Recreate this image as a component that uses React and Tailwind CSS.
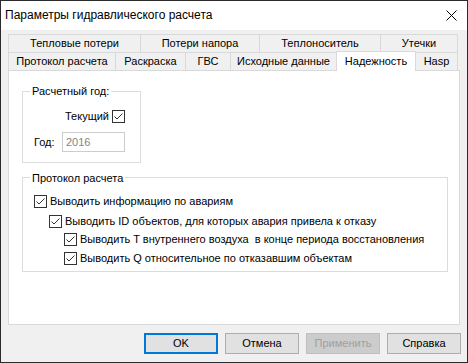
import React from "react";

const font = { fontFamily: '"Liberation Sans", Arial, sans-serif' };

function Check({ className = "" }) {
  return (
    <svg width="13" height="13" viewBox="0 0 13 13" className={"shrink-0 " + className}>
      <rect x="0.5" y="0.5" width="12" height="12" fill="#fff" stroke="#333" />
      <path d="M2.5 6.5 L5 9 L10.5 3.5" fill="none" stroke="#333" strokeWidth="1" />
    </svg>
  );
}

function Tab({ w, label, last }) {
  return (
    <div
      className={
        "h-[18px] flex items-center justify-center border-t border-l border-[#d9d9d9] bg-[#f0f0f0] " +
        (last ? "border-r " : "")
      }
      style={{ width: w }}
    >
      {label}
    </div>
  );
}

export default function App() {
  return (
    <div
      className="w-[468px] h-[363px] border border-[#2b2b2b] bg-[#f0f0f0] flex flex-col text-[11px] text-black overflow-hidden"
      style={font}
    >
      {/* title bar */}
      <div className="h-[29px] bg-white flex items-center justify-between shrink-0">
        <span className="ml-[4px] text-[12px] mt-[-2px]">Параметры гидравлического расчета</span>
        <svg width="11" height="11" viewBox="0 0 11 11" className="mr-[10px] mt-[-1px]">
          <path d="M0.5 0.5 L10.5 10.5 M10.5 0.5 L0.5 10.5" stroke="#000" strokeWidth="1" />
        </svg>
      </div>

      {/* body */}
      <div className="flex flex-col px-[7px] pt-[4px]">
        {/* tabs upper row */}
        <div className="flex">
          <Tab w={132} label="Тепловые потери" />
          <Tab w={119} label="Потери напора" />
          <Tab w={121} label="Теплоноситель" />
          <Tab w={78} label="Утечки" last />
        </div>
        {/* tabs lower row */}
        <div className="flex relative z-10 h-[18px]">
          <Tab w={107} label="Протокол расчета" />
          <Tab w={70} label="Раскраска" />
          <Tab w={45} label="ГВС" />
          <Tab w={106} label="Исходные данные" />
          <div className="w-[80px] h-[20px] -mt-[1px] bg-white border-t border-l border-r border-[#d9d9d9] flex items-center justify-center">
            Надежность
          </div>
          <div className="w-[42px] h-[18px] flex items-center justify-center border-t border-r border-[#d9d9d9] bg-[#f0f0f0]">
            Hasp
          </div>
        </div>

        {/* panel */}
        <div className="w-[452px] h-[255px] bg-white border border-[#d9d9d9] pt-[20px] pl-[13px]">
          {/* group 1 */}
          <div className="relative w-[119px] h-[72px] border border-[#dcdcdc]">
            <span className="absolute left-[7px] -top-[8px] bg-white px-[2px] leading-[14px]">Расчетный год:</span>
            <div className="flex flex-col pt-[18px]">
              <div className="flex items-center justify-end pr-[15px] h-[13px]">
                <span className="mr-[3px]">Текущий</span>
                <Check />
              </div>
              <div className="flex items-center mt-[9px] pl-[11px]">
                <span className="w-[28px]">Год:</span>
                <div className="w-[63px] h-[20px] border border-[#cccccc] bg-white flex items-center pl-[3px] text-[#838383]">
                  2016
                </div>
              </div>
            </div>
          </div>

          {/* group 2 */}
          <div className="relative w-[426px] h-[95px] border border-[#dcdcdc] mt-[14px]">
            <span className="absolute left-[7px] -top-[7px] bg-white px-[2px] leading-[14px]">Протокол расчета</span>
            <div className="flex flex-col pt-[17px] pl-[11px]">
              <div className="flex items-center h-[13px]">
                <Check />
                <span className="ml-[3px]">Выводить информацию по авариям</span>
              </div>
              <div className="flex items-center h-[13px] mt-[7px] pl-[15px]">
                <Check />
                <span className="ml-[3px]">Выводить ID объектов, для которых авария привела к отказу</span>
              </div>
              <div className="flex items-center h-[13px] mt-[5px] pl-[30px]">
                <Check />
                <span className="ml-[3px] whitespace-pre">Выводить T внутреннего воздуха  в конце периода восстановления</span>
              </div>
              <div className="flex items-center h-[13px] mt-[6px] pl-[30px]">
                <Check />
                <span className="ml-[3px]">Выводить Q относительное по отказавшим объектам</span>
              </div>
            </div>
          </div>
        </div>

        {/* buttons */}
        <div className="flex justify-end gap-[7px] mt-[8px] mr-[-1px]">
          <div className="w-[74px] h-[21px] border-2 border-[#0078d7] bg-[#e1e1e1] flex items-center justify-center">OK</div>
          <div className="w-[74px] h-[21px] border border-[#adadad] bg-[#e1e1e1] flex items-center justify-center">Отмена</div>
          <div className="w-[74px] h-[21px] border border-[#bfbfbf] bg-[#cccccc] text-[#a0a0a0] flex items-center justify-center">Применить</div>
          <div className="w-[74px] h-[21px] border border-[#adadad] bg-[#e1e1e1] flex items-center justify-center">Справка</div>
        </div>
      </div>
    </div>
  );
}
